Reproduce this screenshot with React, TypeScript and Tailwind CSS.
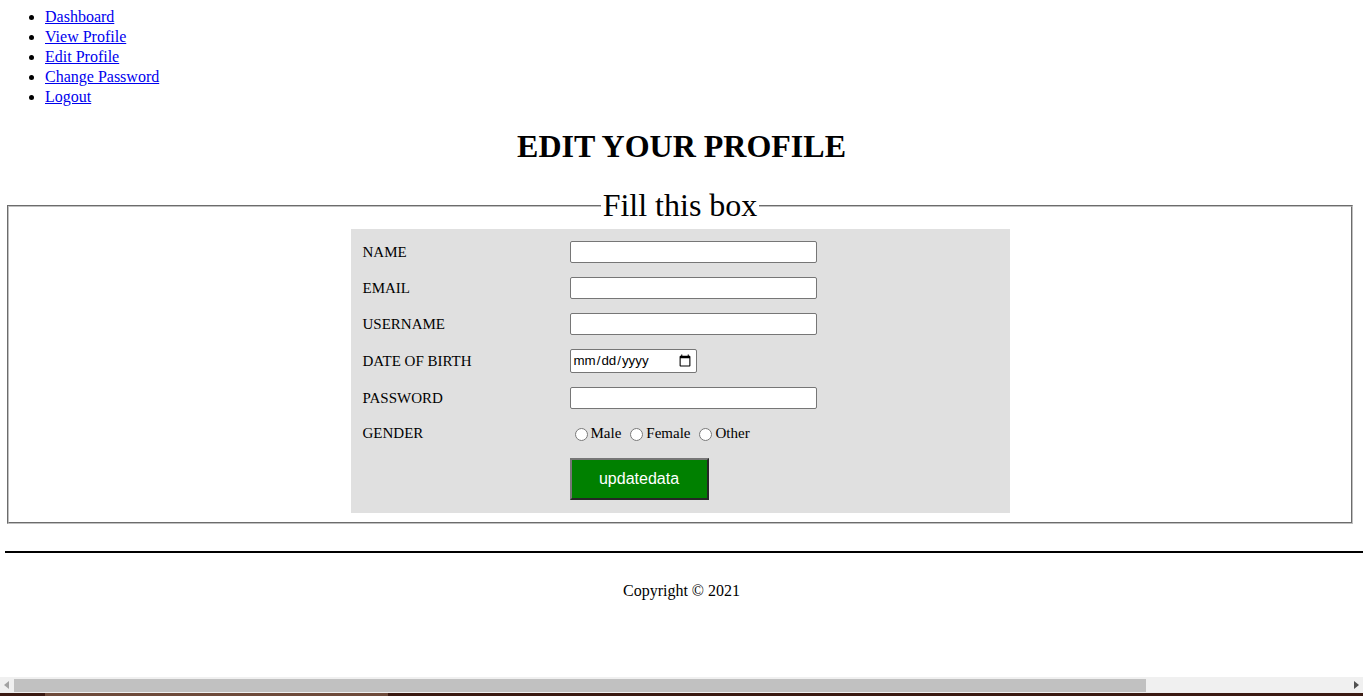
import { FC, useState } from "react";

const navLinks = ["Dashboard", "View Profile", "Edit Profile", "Change Password", "Logout"];

// text rows of the edit form
const textFields = [
  { label: "NAME", type: "text" },
  { label: "EMAIL", type: "email" },
  { label: "USERNAME", type: "text" },
];

const inputCls =
  "h-[22px] w-[247px] rounded-[2px] border border-[#767676] bg-white px-[2px] text-[13.33px] font-['Liberation_Sans',sans-serif] outline-none";

const App: FC = () => {
  const [gender, setGender] = useState<string>("");

  return (
    <div className="flex min-h-screen flex-col overflow-hidden bg-white font-['Liberation_Serif',serif] text-black">
      <div className="px-[5px] pt-[7px]">
        {/* menu */}
        <ul className="list-disc pl-[40px] text-[16px] leading-[20px]">
          {navLinks.map((link) => (
            <li key={link}>
              <a href="#" className="text-[#0000ee] underline">
                {link}
              </a>
            </li>
          ))}
        </ul>

        <h1 className="mt-[21px] text-center text-[32px] font-bold leading-[37px]">EDIT YOUR PROFILE</h1>

        <fieldset className="ml-[2px] mt-[22px] w-[1346px] border-2 border-[#c0c0c0] px-3 pb-[9px] pt-[4.6px] [border-style:groove]">
          <legend className="mx-auto px-[2px] text-[32px] leading-[37px]">Fill this box</legend>

          <form
            onSubmit={(e) => e.preventDefault()}
            className="mx-auto grid w-[659px] grid-cols-[207px_auto] items-center gap-y-[14px] bg-[#e0e0e0] pb-[13px] pl-3 pt-3 text-[15px] leading-[18px]"
          >
            {textFields.map((f) => (
              <div key={f.label} className="contents">
                <label>{f.label}</label>
                <input type={f.type} className={inputCls} />
              </div>
            ))}

            <label>DATE OF BIRTH</label>
            <input
              type="date"
              className="h-[24px] w-[127px] rounded-[2px] border border-[#767676] bg-white px-[2px] text-[13.33px] font-['Liberation_Sans',sans-serif]"
            />

            <label>PASSWORD</label>
            <input type="password" className={inputCls} />

            <label>GENDER</label>
            <div className="flex h-[21px] items-center text-[15px]">
              {["Male", "Female", "Other"].map((g) => (
                <label key={g} className="flex items-center">
                  <input
                    type="radio"
                    name="gender"
                    checked={gender === g}
                    onChange={() => setGender(g)}
                    className="ml-[5px] mr-[3px] mt-[3px] h-[13px] w-[13px]"
                  />
                  <span className="mr-[4px]">{g}</span>
                </label>
              ))}
            </div>

            <div />
            <button
              type="submit"
              className="h-[42px] w-[139px] border-2 border-b-[#262626] border-l-[#767676] border-r-[#262626] border-t-[#767676] bg-[#008000] font-['Liberation_Sans',sans-serif] text-[16px] text-white"
            >
              updatedata
            </button>
          </form>
        </fieldset>

        <div className="-mr-[5px] mt-[27px] border-t-2 border-black" />

        <p className="mt-[29px] text-center text-[16px] leading-[18px]">Copyright © 2021</p>
      </div>

      <div className="flex-1" />

      {/* horizontal scroll bar */}
      <div className="flex h-[16px] items-center bg-[#f0f0f0]">
        <div className="flex w-[14px] justify-center">
          <svg width="6" height="8" viewBox="0 0 6 8">
            <path d="M5 0 L0 4 L5 8 Z" fill="#a3a3a3" />
          </svg>
        </div>
        <div className="h-[13px] w-[1132px] bg-[#c1c1c1]" />
        <div className="flex-1" />
        <div className="flex w-[14px] justify-center">
          <svg width="6" height="8" viewBox="0 0 6 8">
            <path d="M1 0 L6 4 L1 8 Z" fill="#505050" />
          </svg>
        </div>
      </div>
      <div className="flex h-[3px] bg-[#3a1a12]">
        <div className="ml-[45px] w-[343px] bg-[#6e4b3b]" />
      </div>
    </div>
  );
};

export default App;
